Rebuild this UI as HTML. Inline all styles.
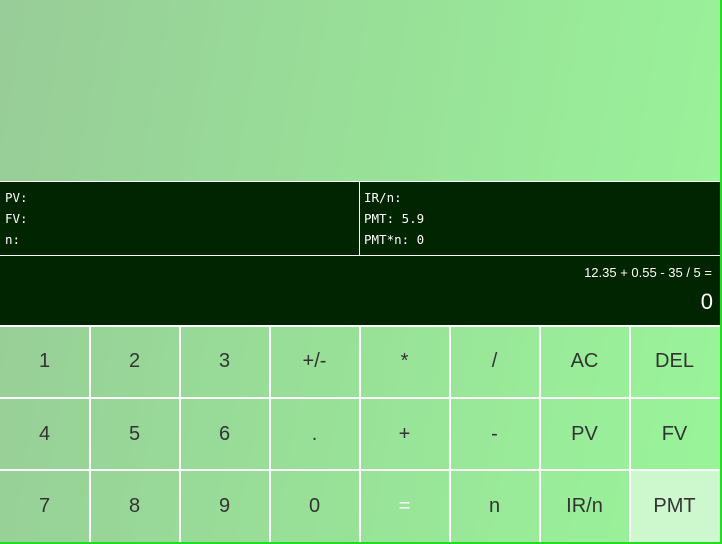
<!DOCTYPE html>
<html><head><style>
html,body{margin:0;padding:0;width:722px;height:544px;overflow:hidden;background:#22dd22}
.wrap{position:absolute;left:0;top:0;width:720px;height:542px;background:linear-gradient(100deg,#98cc98,#99f599)}
.info{position:absolute;left:0;top:181px;width:720px;height:73px;background:#012401;border-top:1px solid #fff;border-bottom:1px solid #fff}
.col{position:absolute;top:0;height:73px;font-family:"DejaVu Sans Mono","Liberation Mono",monospace;font-size:12.5px;color:#fff;line-height:21px;padding-top:5px;box-sizing:border-box}
.disp{position:absolute;left:0;top:256px;width:720px;height:69px;background:#012401;color:#fff;font-family:"Liberation Sans",sans-serif;text-align:right}
.b{position:absolute;width:89px;height:71px;display:flex;align-items:center;justify-content:center;font-family:"Liberation Sans",sans-serif;font-size:20px;color:#333}
.v{position:absolute;top:326px;width:2px;height:216px;background:#fff}
.h{position:absolute;left:0;width:720px;height:2px;background:#fff}
</style></head><body>
<div class="wrap">
<div class="info">
<div class="col" style="left:5px">PV:<br>FV:<br>n:</div>
<div style="position:absolute;left:359px;top:0;width:1px;height:73px;background:#fff"></div>
<div class="col" style="left:364px">IR/n:<br>PMT: 5.9<br>PMT*n: 0</div>
</div>
<div class="disp"><div style="position:absolute;right:8px;top:9px;font-size:13px">12.35 + 0.55 - 35 / 5 =</div><div style="position:absolute;right:7px;top:33px;font-size:22px">0</div></div>
</div>
<div style="position:absolute;left:630px;top:471px;width:90px;height:71px;background:#cdf8cd"></div>
<div class="h" style="top:325px"></div><div class="h" style="top:397px"></div><div class="h" style="top:469px"></div>
<div class="v" style="left:89px"></div><div class="v" style="left:179px"></div><div class="v" style="left:269px"></div><div class="v" style="left:359px"></div><div class="v" style="left:449px"></div><div class="v" style="left:539px"></div><div class="v" style="left:629px"></div>
<div class="b" style="left:0;top:326px">1</div><div class="b" style="left:90px;top:326px">2</div><div class="b" style="left:180px;top:326px">3</div><div class="b" style="left:270px;top:326px">+/-</div><div class="b" style="left:360px;top:326px">*</div><div class="b" style="left:450px;top:326px">/</div><div class="b" style="left:540px;top:326px">AC</div><div class="b" style="left:630px;top:326px">DEL</div>
<div class="b" style="left:0;top:399px">4</div><div class="b" style="left:90px;top:399px">5</div><div class="b" style="left:180px;top:399px">6</div><div class="b" style="left:270px;top:399px">.</div><div class="b" style="left:360px;top:399px">+</div><div class="b" style="left:450px;top:399px">-</div><div class="b" style="left:540px;top:399px">PV</div><div class="b" style="left:630px;top:399px">FV</div>
<div class="b" style="left:0;top:471px">7</div><div class="b" style="left:90px;top:471px">8</div><div class="b" style="left:180px;top:471px">9</div><div class="b" style="left:270px;top:471px">0</div><div class="b" style="left:360px;top:471px;color:#fff">=</div><div class="b" style="left:450px;top:471px">n</div><div class="b" style="left:540px;top:471px">IR/n</div><div class="b" style="left:630px;top:471px">PMT</div>
</body></html>
